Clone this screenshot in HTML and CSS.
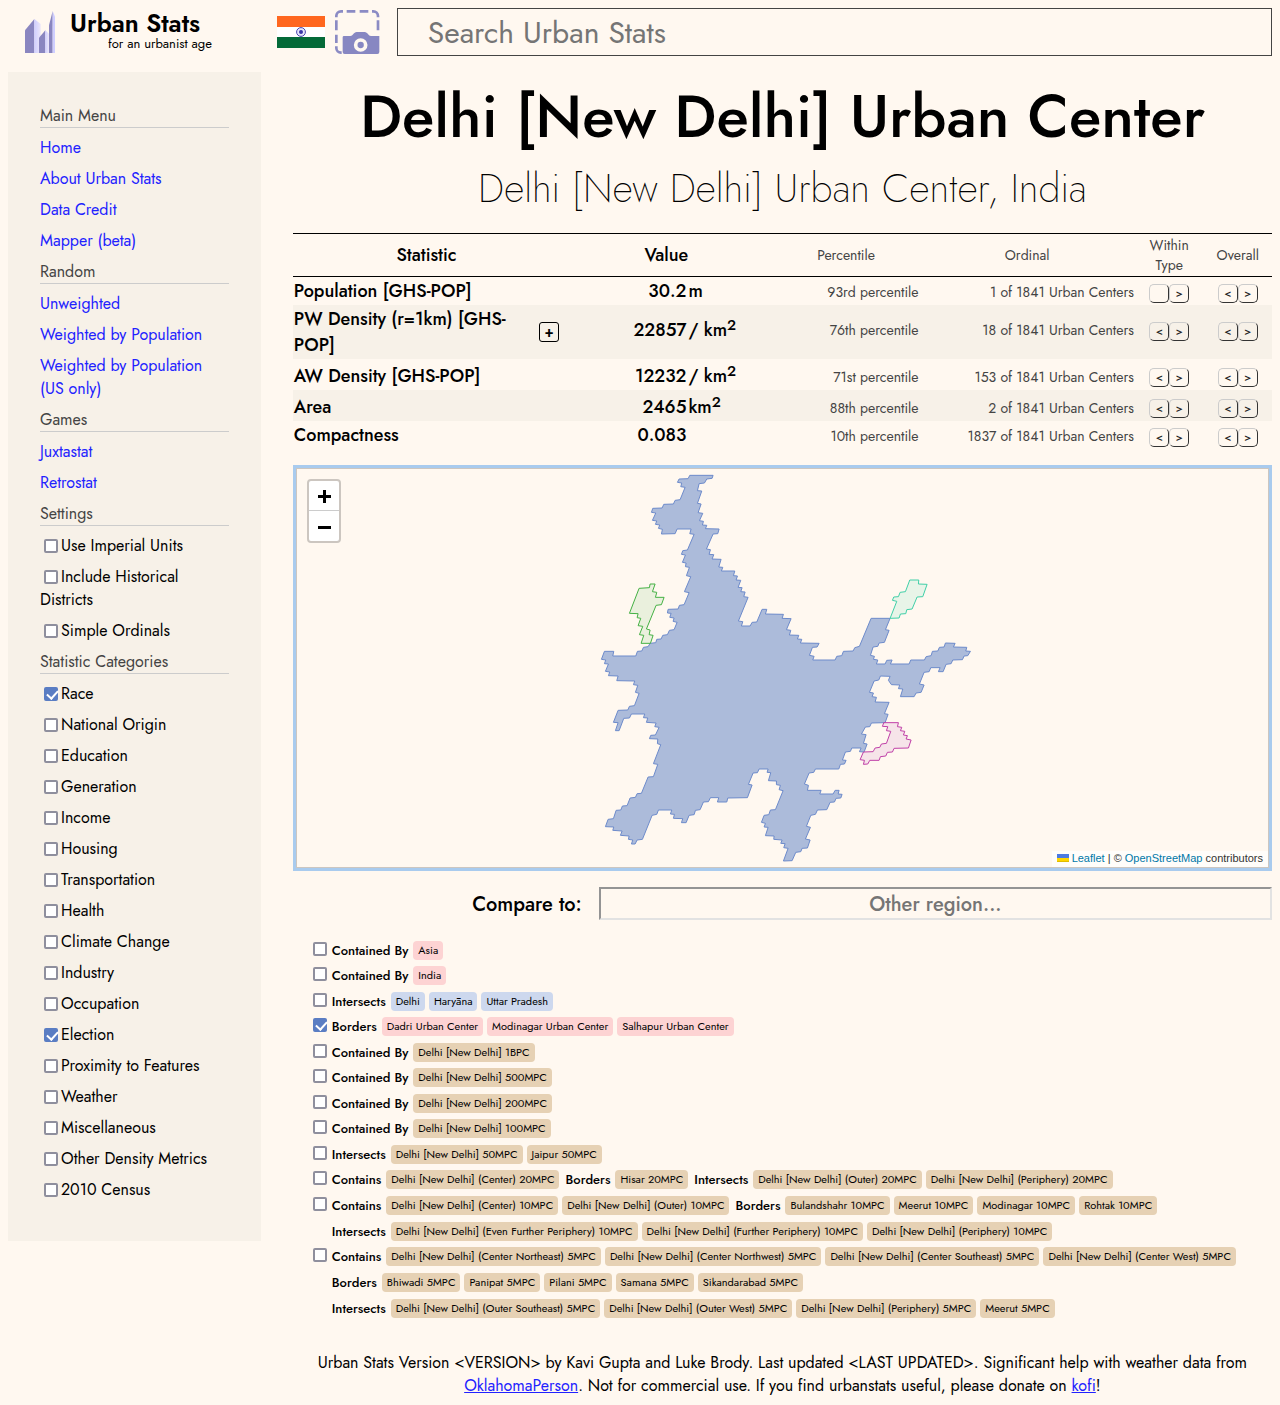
FILE: index.html
```html
<!DOCTYPE html>
<html lang="en">
<head>
<meta charset="utf-8">
<meta name="viewport" content="width=device-width, initial-scale=1">
<title>Delhi [New Delhi] Urban Center</title>
<link rel="stylesheet" href="styles.css">
</head>
<body>
<header class="header">
  <a class="logo" href="#">
    <svg class="logo-mark" viewBox="72 30 96 132" aria-hidden="true">
      <defs><linearGradient id="face"><stop offset="0" stop-color="#cfceff"/><stop offset="1" stop-color="#ebe6f8"/></linearGradient></defs>
      <path fill="#8a86c0" d="M75 91L103 57V159H75Z"/>
      <path fill="url(#face)" d="M103 57L122 72V159H103Z"/>
      <path fill="#8a86c0" d="M117 113L136 91V159H117Z"/>
      <path fill="url(#face)" d="M136 91L147 101V159H136Z"/>
      <path fill="#8a86c0" d="M147 76L158 33V159H147Z"/>
      <path fill="#cfceff" d="M158 33L165 50V159H158Z"/>
    </svg>
    <span class="logo-text"><span class="logo-name">Urban Stats</span><span class="logo-tag">for an urbanist age</span></span>
  </a>
  <div class="tools">
    <svg class="flag" viewBox="0 0 48 32" role="img" aria-label="India">
      <path fill="#ff671f" d="M0 0h48v11H0z"/><path fill="#fff" d="M0 11h48v10H0z"/><path fill="#046a38" d="M0 21h48v11H0z"/>
      <circle cx="24" cy="16" r="4.4" fill="#e6e6fa" stroke="#4a46b0" stroke-width="1"/><circle cx="24" cy="16" r="2" fill="#3a36a8"/>
    </svg>
    <button class="shot" aria-label="Screenshot">
      <svg viewBox="0 0 144 144" aria-hidden="true">
        <g fill="none" stroke="#8b8bc4" stroke-width="8">
          <path d="M10 28V24A14 14 0 0 1 24 10H30M41 10H67M80 10H106M117 10H121A14 14 0 0 1 135 24V28M135 37V67M10 37V67M10 80V105M10 115V120A14 14 0 0 0 24 134H26"/>
        </g>
        <path fill="#8787c2" d="M33 84H52C60 84 62 72 71 72H95C104 72 106 84 114 84H139V132Q139 138 133 138H35Q29 138 29 132V88Q29 84 33 84Z"/>
        <circle cx="83" cy="111" r="15" fill="#8787c2" stroke="#fff8f0" stroke-width="11"/>
      </svg>
    </button>
  </div>
  <input class="search" type="text" placeholder="Search Urban Stats" aria-label="Search Urban Stats">
</header>

<div class="page">
<nav class="sidebar">
  <h2>Main Menu</h2>
  <a href="#">Home</a><a href="#">About Urban Stats</a><a href="#">Data Credit</a><a href="#">Mapper (beta)</a>
  <h2>Random</h2>
  <a href="#">Unweighted</a><a href="#">Weighted by Population</a><a href="#">Weighted by Population (US only)</a>
  <h2>Games</h2>
  <a href="#">Juxtastat</a><a href="#">Retrostat</a>
  <h2>Settings</h2>
  <label><input type="checkbox">Use Imperial Units</label>
  <label><input type="checkbox">Include Historical Districts</label>
  <label><input type="checkbox">Simple Ordinals</label>
  <h2>Statistic Categories</h2>
  <label><input type="checkbox" checked>Race</label>
  <label><input type="checkbox">National Origin</label>
  <label><input type="checkbox">Education</label>
  <label><input type="checkbox">Generation</label>
  <label><input type="checkbox">Income</label>
  <label><input type="checkbox">Housing</label>
  <label><input type="checkbox">Transportation</label>
  <label><input type="checkbox">Health</label>
  <label><input type="checkbox">Climate Change</label>
  <label><input type="checkbox">Industry</label>
  <label><input type="checkbox">Occupation</label>
  <label><input type="checkbox" checked>Election</label>
  <label><input type="checkbox">Proximity to Features</label>
  <label><input type="checkbox">Weather</label>
  <label><input type="checkbox">Miscellaneous</label>
  <label><input type="checkbox">Other Density Metrics</label>
  <label><input type="checkbox">2010 Census</label>
</nav>

<main class="main">
  <h1>Delhi [New Delhi] Urban Center</h1>
  <p class="subtitle">Delhi [New Delhi] Urban Center, India</p>

  <table class="stats">
    <colgroup><col class="c-name"><col class="c-value"><col class="c-unit"><col class="c-pct"><col class="c-ord"><col class="c-nav"><col class="c-nav"></colgroup>
    <thead><tr><th>Statistic</th><th colspan="2">Value</th><th class="minor">Percentile</th><th class="minor">Ordinal</th><th class="minor">Within Type</th><th class="minor">Overall</th></tr></thead>
    <tbody>
      <tr><th scope="row">Population [GHS-POP]</th><td class="value">30.2</td><td class="unit">m</td><td class="small">93rd percentile</td><td class="small">1 of 1841 Urban Centers</td><td class="nav"><button aria-label="No previous"></button><button>&gt;</button></td><td class="nav"><button>&lt;</button><button>&gt;</button></td></tr>
      <tr class="double"><th scope="row"><div class="expandable"><span>PW Density (r=1km) [GHS-POP]</span><button class="expand">+</button></div></th><td class="value">22857</td><td class="unit">/ km<sup>2</sup></td><td class="small">76th percentile</td><td class="small">18 of 1841 Urban Centers</td><td class="nav"><button>&lt;</button><button>&gt;</button></td><td class="nav"><button>&lt;</button><button>&gt;</button></td></tr>
      <tr class="tall"><th scope="row">AW Density [GHS-POP]</th><td class="value">12232</td><td class="unit">/ km<sup>2</sup></td><td class="small">71st percentile</td><td class="small">153 of 1841 Urban Centers</td><td class="nav"><button>&lt;</button><button>&gt;</button></td><td class="nav"><button>&lt;</button><button>&gt;</button></td></tr>
      <tr class="tall"><th scope="row">Area</th><td class="value">2465</td><td class="unit">km<sup>2</sup></td><td class="small">88th percentile</td><td class="small">2 of 1841 Urban Centers</td><td class="nav"><button>&lt;</button><button>&gt;</button></td><td class="nav"><button>&lt;</button><button>&gt;</button></td></tr>
      <tr><th scope="row">Compactness</th><td class="value">0.083</td><td class="unit"></td><td class="small">10th percentile</td><td class="small">1837 of 1841 Urban Centers</td><td class="nav"><button>&lt;</button><button>&gt;</button></td><td class="nav"><button>&lt;</button><button>&gt;</button></td></tr>
    </tbody>
  </table>

  <div class="map">
    <svg class="shapes" viewBox="-879 12 2913 1194" role="img" aria-label="Map of Delhi [New Delhi] Urban Center">
      <path class="region" d="M299 31L369 31 366 40 350 42 343 54 327 56 322 77 335 78 322 115 333 117 324 143 338 145 328 167 340 169 337 180 350 181 346 191 387 192 383 206 369 207 349 252 361 254 357 268 371 269 366 282 393 283 386 306 398 307 394 318 434 318 430 332 442 333 438 345 452 346 444 367 456 368 452 380 465 381 461 395 474 397 445 468 458 470 454 483 480 483 486 472 500 471 516 433 530 433 526 447 580 448 576 460 603 461 589 494 602 496 598 510 626 511 622 522 635 523 631 534 687 535 681 546 667 547 658 571 672 574 668 585 735 585 740 574 755 572 760 559 789 558 794 548 808 544 843 460 900 460 886 494 897 496 883 532 867 534 863 544 849 546 841 571 853 574 850 583 863 585 859 597 885 597 890 586 906 585 901 597 957 597 962 585 1003 585 1008 575 1023 572 1027 559 1043 558 1048 547 1062 546 1066 534 1095 535 1090 546 1130 547 1127 558 1141 559 1133 572 1122 573 1117 584 1088 585 1083 596 1068 598 1059 620 1045 620 1050 608 1022 608 1017 620 1002 622 988 657 1002 660 993 682 978 684 972 695 931 695 938 672 925 671 929 660 904 659 895 646 900 634 871 633 866 645 852 648 838 682 850 684 846 695 859 697 855 711 897 712 883 746 894 748 885 773 844 774 839 785 826 786 814 807 828 809 820 835 831 837 822 861 808 860 813 849 785 849 781 859 766 861 757 885 768 886 763 897 751 898 746 912 676 912 671 922 657 924 643 957 655 961 652 976 693 976 689 987 729 987 735 976 747 976 744 987 756 988 752 999 738 1000 733 1011 720 1012 710 1034 682 1035 676 1048 662 1051 649 1084 661 1087 646 1122 660 1125 652 1149 636 1150 632 1160 617 1162 606 1187 580 1188 594 1150 581 1148 585 1136 572 1135 576 1125 551 1123 552 1113 526 1112 534 1087 522 1086 526 1075 514 1072 522 1051 536 1049 541 1035 556 1034 579 977 567 974 571 961 559 959 559 948 535 947 542 923 531 922 534 912 507 912 502 923 489 924 475 958 486 960 472 998 413 999 410 1011 382 1011 386 998 361 998 355 1010 340 1011 330 1034 316 1036 312 1049 297 1051 288 1073 274 1073 278 1061 250 1060 253 1048 241 1047 245 1035 205 1035 200 1048 186 1051 157 1123 141 1125 135 1137 124 1137 128 1125 115 1123 117 1113 91 1111 96 1098 68 1096 71 1086 46 1085 54 1063 70 1061 78 1036 92 1035 97 1023 111 1022 120 999 136 997 141 986 154 985 174 936 190 935 203 898 190 896 212 839 202 836 203 822 178 821 182 811 196 810 207 787 194 785 198 774 169 772 173 759 160 758 164 747 124 747 118 759 101 760 87 797 76 797 84 773 70 772 84 736 113 735 118 724 133 722 147 685 136 682 143 661 130 659 134 648 80 647 84 633 55 632 59 621 46 619 55 597 43 596 47 585 34 583 43 559 71 559 68 573 137 573 142 559 155 558 160 547 174 545 180 535 197 533 200 523 213 522 218 511 232 509 238 496 252 494 261 472 249 469 252 459 239 457 243 445 232 444 234 433 264 432 268 421 282 419 297 383 283 380 302 335 289 332 298 307 286 305 288 294 277 292 286 270 274 268 278 257 292 255 312 208 299 206 303 192 261 192 255 206 214 207 217 193 205 190 209 180 196 178 200 168 187 166 197 144 184 142 188 130 216 129 221 118 250 117 255 106 270 104 285 67 272 65 275 54 262 52 267 42 294 41Z"/>
      <path class="dadri" d="M147 370L178 368 180 357 195 357 187 380 200 382 196 397 222 397 214 419 198 421 169 492 180 495 177 509 189 511 181 535 153 535 161 511 148 509 158 484 144 482 152 460 141 458 144 446 118 445Z"/>
      <path class="modinagar" d="M959 345L986 345 985 357 1011 358 998 395 981 396 966 432 950 434 947 446 931 447 927 459 900 460 920 409 907 406 911 396 925 395 930 382 946 380Z"/>
      <path class="salhapur" d="M881 773L925 773 922 785 935 787 931 797 944 799 940 810 952 812 948 822 963 825 955 849 912 850 907 861 892 862 887 873 871 875 867 886 839 886 833 897 820 898 823 886 810 884 820 861 849 860 855 849 869 847 874 837 889 835 902 799 889 797 893 785 877 784Z"/>
    </svg>
    <div class="zoom"><button aria-label="Zoom in"><svg viewBox="0 0 13 13" aria-hidden="true"><path d="M6.5 0V13M0 6.5H13"/></svg></button><button aria-label="Zoom out"><svg viewBox="0 0 13 13" aria-hidden="true"><path d="M0 6.5H13"/></svg></button></div>
    <div class="credit"><a href="#"><svg viewBox="0 0 12 8" aria-hidden="true"><path fill="#4c7be1" d="M0 0h12v4H0z"/><path fill="#ffd500" d="M0 4h12v3H0z"/><path fill="#e0bc00" d="M0 7h12v1H0z"/></svg> Leaflet</a> | © <a href="#">OpenStreetMap</a> contributors</div>
  </div>

  <div class="compare">
    <label for="compare">Compare to:</label>
    <input id="compare" type="text" placeholder="Other region...">
  </div>

  <ul class="related">
    <li><input type="checkbox" aria-label="Show continent"><div class="groups"><div class="group"><b>Contained By</b><a class="pink" href="#">Asia</a></div></div></li>
    <li><input type="checkbox" aria-label="Show country"><div class="groups"><div class="group"><b>Contained By</b><a class="pink" href="#">India</a></div></div></li>
    <li><input type="checkbox" aria-label="Show states"><div class="groups"><div class="group"><b>Intersects</b><a class="blue" href="#">Delhi</a><a class="blue" href="#">Haryāna</a><a class="blue" href="#">Uttar Pradesh</a></div></div></li>
    <li><input type="checkbox" checked aria-label="Show urban centers"><div class="groups"><div class="group"><b>Borders</b><a class="pink" href="#">Dadri Urban Center</a><a class="pink" href="#">Modinagar Urban Center</a><a class="pink" href="#">Salhapur Urban Center</a></div></div></li>
    <li><input type="checkbox" aria-label="Show 1BPC"><div class="groups"><div class="group"><b>Contained By</b><a href="#">Delhi [New Delhi] 1BPC</a></div></div></li>
    <li><input type="checkbox" aria-label="Show 500MPC"><div class="groups"><div class="group"><b>Contained By</b><a href="#">Delhi [New Delhi] 500MPC</a></div></div></li>
    <li><input type="checkbox" aria-label="Show 200MPC"><div class="groups"><div class="group"><b>Contained By</b><a href="#">Delhi [New Delhi] 200MPC</a></div></div></li>
    <li><input type="checkbox" aria-label="Show 100MPC"><div class="groups"><div class="group"><b>Contained By</b><a href="#">Delhi [New Delhi] 100MPC</a></div></div></li>
    <li><input type="checkbox" aria-label="Show 50MPC"><div class="groups"><div class="group"><b>Intersects</b><a href="#">Delhi [New Delhi] 50MPC</a><a href="#">Jaipur 50MPC</a></div></div></li>
    <li><input type="checkbox" aria-label="Show 20MPC"><div class="groups"><div class="group"><b>Contains</b><a href="#">Delhi [New Delhi] (Center) 20MPC</a></div><div class="group"><b>Borders</b><a href="#">Hisar 20MPC</a></div><div class="group"><b>Intersects</b><a href="#">Delhi [New Delhi] (Outer) 20MPC</a><a href="#">Delhi [New Delhi] (Periphery) 20MPC</a></div></div></li>
    <li><input type="checkbox" aria-label="Show 10MPC"><div class="groups"><div class="group"><b>Contains</b><a href="#">Delhi [New Delhi] (Center) 10MPC</a><a href="#">Delhi [New Delhi] (Outer) 10MPC</a></div><div class="group"><b>Borders</b><a href="#">Bulandshahr 10MPC</a><a href="#">Meerut 10MPC</a><a href="#">Modinagar 10MPC</a><a href="#">Rohtak 10MPC</a></div><div class="group"><b>Intersects</b><a href="#">Delhi [New Delhi] (Even Further Periphery) 10MPC</a><a href="#">Delhi [New Delhi] (Further Periphery) 10MPC</a><a href="#">Delhi [New Delhi] (Periphery) 10MPC</a></div></div></li>
    <li><input type="checkbox" aria-label="Show 5MPC"><div class="groups"><div class="group"><b>Contains</b><a href="#">Delhi [New Delhi] (Center Northeast) 5MPC</a><a href="#">Delhi [New Delhi] (Center Northwest) 5MPC</a><a href="#">Delhi [New Delhi] (Center Southeast) 5MPC</a><a href="#">Delhi [New Delhi] (Center West) 5MPC</a></div><div class="group"><b>Borders</b><a href="#">Bhiwadi 5MPC</a><a href="#">Panipat 5MPC</a><a href="#">Pilani 5MPC</a><a href="#">Samana 5MPC</a><a href="#">Sikandarabad 5MPC</a></div><div class="group"><b>Intersects</b><a href="#">Delhi [New Delhi] (Outer Southeast) 5MPC</a><a href="#">Delhi [New Delhi] (Outer West) 5MPC</a><a href="#">Delhi [New Delhi] (Periphery) 5MPC</a><a href="#">Meerut 5MPC</a></div></div></li>
  </ul>

  <footer class="footer">Urban Stats Version &lt;VERSION&gt; by Kavi Gupta and Luke Brody. Last updated &lt;LAST UPDATED&gt;. Significant help with weather data from <a href="#">OklahomaPerson</a>. Not for commercial use. If you find urbanstats useful, please donate on <a href="#">kofi</a>!</footer>
</main>
</div>
</body>
</html>
```
FILE: styles.css
```css
* { box-sizing: border-box; }
body {
  margin: 0;
  padding: 8px;
  background: #fff8f0;
  color: #000;
  font: 16px/23px Jost, Lato, sans-serif;
}
button, input { font-family: inherit; color: inherit; }

.header { display: flex; align-items: center; height: 48px; margin-bottom: 16px; }
.logo { flex: none; display: flex; align-items: center; width: 20%; min-width: 230px; padding-left: 16px; gap: 14px; color: #000; text-decoration: none; }
.logo-mark { flex: none; width: 32px; height: 44px; }
.logo-text { display: flex; flex-direction: column; }
.logo-name { font-size: 25px; font-weight: 600; line-height: 24px; }
.logo-tag { font-size: 13px; line-height: 18px; padding-left: 38px; }
.tools { flex: none; display: flex; align-items: center; gap: 8px; margin: 0 16px; }
.flag { width: 48px; height: 32px; }
.shot { width: 48px; height: 48px; padding: 0; border: 0; background: none; }
.shot svg { display: block; }
.search { flex: 1; min-width: 0; height: 48px; padding: 0 30px; border: 1px solid #444; background: #fff8f0; font-size: 30px; }
.search::placeholder, .compare input::placeholder { color: #757575; opacity: 1; }

.page { display: flex; align-items: flex-start; }
.sidebar { flex: none; width: 20%; padding: 32px 32px 40px; background: #f7f1e8; display: flex; flex-direction: column; gap: 8px; }
.sidebar h2 { margin: 0; font-size: 16px; font-weight: 400; line-height: 23px; color: #444; border-bottom: 1px solid #ccc; }
.sidebar a { color: #2222ff; text-decoration: none; }
.main { flex: 1; min-width: 0; padding-left: 32px; }

input[type="checkbox"] { appearance: none; flex: none; width: 14px; height: 14px; margin: 0 3px 0 4px; border: 2px solid #8f8f9d; border-radius: 2px; background: #fff; vertical-align: -2px; }
input[type="checkbox"]:checked { border-color: #5a7dc3; background: #5a7dc3; }
input[type="checkbox"]:checked::after { content: ""; display: block; width: 5px; height: 9px; margin: -1px 0 0 3px; border: solid #fff; border-width: 0 2px 2px 0; transform: rotate(42deg); }

h1 { margin: 0; padding-top: 4px; font-size: 60px; font-weight: 500; line-height: 82px; text-align: center; }
.subtitle { margin: 0 0 14px; font-size: 40px; font-weight: 200; line-height: 61px; text-align: center; }

.stats { width: 100%; table-layout: fixed; border-collapse: collapse; font-size: 18px; line-height: 26px; }
.c-name { width: 27.3%; }
.c-value { width: 13%; }
.c-unit { width: 8.7%; }
.c-pct { width: 15%; }
.c-ord { width: 22%; }
.c-nav { width: 7%; }
.stats th, .stats td { padding: 1px; font-weight: 500; }
.stats thead th { border: solid #000; border-width: 1px 0; text-align: center; }
.stats thead .minor { padding: 1px 12px; font-size: 14px; font-weight: 400; line-height: 20px; color: #444; }
.stats thead .minor:last-child { padding: 1px; }
.stats tbody th { text-align: left; }
.stats tbody tr:nth-child(even) { background: #f7f1e8; }
.stats .tall th, .stats .tall td { padding-top: 4px; }
.stats .value { text-align: right; }
.stats .small { text-align: right; font-size: 14px; font-weight: 400; color: #444; white-space: nowrap; padding-bottom: 0; padding-top: 3px; line-height: 25px; }
.stats sup { font-size: 15px; line-height: 0; vertical-align: 6px; }
.expandable { display: flex; align-items: center; justify-content: space-between; }
.expandable span { max-width: 224px; }
.expand { flex: none; width: 20px; height: 20px; padding: 0 0 1px; border: 1px solid #000; border-radius: 3px; background: none; font-size: 14px; font-weight: 600; line-height: 16px; }
.stats .nav { padding: 4px 0 0; text-align: center; font-size: 0; line-height: 0; white-space: nowrap; }
.stats .tall .small, .stats .tall .nav { padding-top: 6px; }
.stats .double td { padding-bottom: 6px; }
.nav button { width: 20px; height: 19px; padding: 0 0 2px; border: 1px solid; border-color: #ccc #333 #333 #ccc; border-radius: 5px; background: none; vertical-align: middle; color: #222; font-size: 11px; font-weight: 500; line-height: 16px; }

.map { position: relative; margin-top: 16px; border: 3px solid #a9cbee; }
.shapes { display: block; width: 100%; height: 400px; border: 1px solid #ccc6c0; }
.shapes path { stroke-width: 3; fill-opacity: .5; }
.region { fill: #5a7dc3; stroke: #6d8bcb; }
.shapes .dadri { fill: #d5e8c9; stroke: #44b144; }
.shapes .modinagar { fill: #d1f0e0; stroke: #40d0a8; }
.shapes .salhapur { fill: #eed0e1; stroke: #c040a8; }
.zoom { position: absolute; left: 11px; top: 11px; display: flex; flex-direction: column; border: 2px solid #ccc6c0; border-radius: 4px; background: #fff; }
.zoom button { display: flex; align-items: center; justify-content: center; width: 30px; height: 30px; padding: 2px 0 0 1px; border: 0; background: none; }
.zoom button:first-child { border-bottom: 1px solid #ccc; }
.zoom svg { width: 13px; height: 13px; stroke: #000; stroke-width: 3; }
.credit { position: absolute; right: 1px; bottom: 1px; padding: 0 5px 1px; background: #fffdfa; color: #333; font: 11px/15px "Liberation Sans", sans-serif; }
.credit a { color: #0078a8; text-decoration: none; }
.credit svg { width: 12px; height: 8px; }

.compare { display: grid; grid-template-columns: 5fr 11fr; align-items: center; margin-top: 16px; font-size: 20px; font-weight: 500; }
.compare label { padding: 2px 17px 0 0; text-align: right; }
.compare input { min-width: 0; height: 33px; padding: 2px 8px 0; border: 2px solid; border-color: #949494 #e2e2e2 #e2e2e2 #949494; background: #fff8f0; font-size: 20px; font-weight: 500; text-align: center; }

.related { list-style: none; margin: 18px 0 0; padding: 0 16px; font-size: 13px; line-height: 25px; }
.related li { display: flex; align-items: flex-start; }
.related li:nth-child(even) { margin-bottom: 1px; }
.related li > input { margin: 4px 5px 0 4px; }
.groups { display: flex; flex-wrap: wrap; gap: 1px 6px; }
.group { display: flex; align-items: center; gap: 4px; }
.group b { font-weight: 500; }
.group a { padding: 0 5px; border-radius: 4px; background: #e6d1b4; color: #000; font-size: 11px; line-height: 19px; text-decoration: none; white-space: nowrap; }
.group b + a { margin-left: 1px; }
.group .pink { background: #fdd3d3; }
.group .blue { background: #cdd8ee; }

.footer { margin: 30px 16px 0; text-align: center; }
.footer a { color: #2222ff; text-decoration: underline; }
```
